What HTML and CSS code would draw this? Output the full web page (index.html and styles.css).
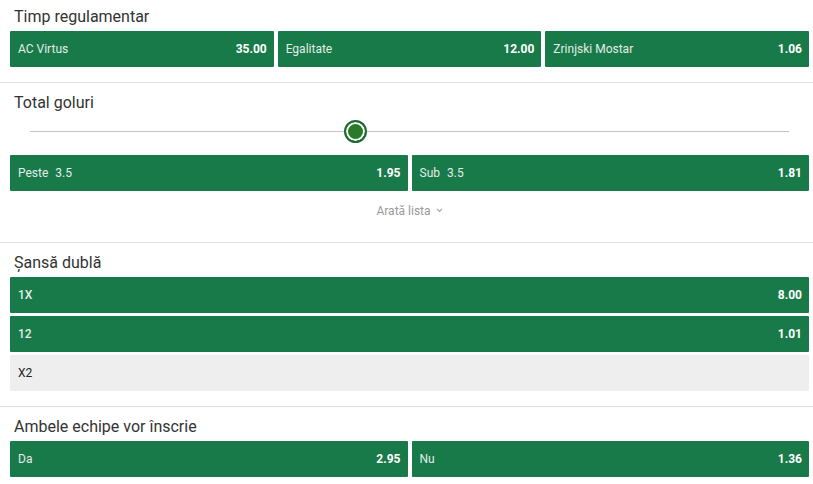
FILE: index.html
```html
<!DOCTYPE html>
<html lang="ro">
<head>
    <meta charset="UTF-8">
    <meta name="viewport" content="width=device-width, initial-scale=1.0">
    <title>Cote meci</title>
    <link rel="stylesheet" href="styles.css">
</head>
<body>
    <div class="market first">
        <h2 class="market-title">Timp regulamentar</h2>
        <div class="odds cols-3">
            <div class="odd"><span class="label">AC Virtus</span><span class="value">35.00</span></div>
            <div class="odd"><span class="label">Egalitate</span><span class="value">12.00</span></div>
            <div class="odd"><span class="label">Zrinjski Mostar</span><span class="value">1.06</span></div>
        </div>
    </div>

    <div class="market">
        <h2 class="market-title">Total goluri</h2>
        <div class="slider">
            <div class="slider-track"></div>
            <div class="slider-knob" style="left: 42.8%;"></div>
        </div>
        <div class="odds cols-2">
            <div class="odd"><span class="label">Peste<span class="line">3.5</span></span><span class="value">1.95</span></div>
            <div class="odd"><span class="label">Sub<span class="line">3.5</span></span><span class="value">1.81</span></div>
        </div>
        <div class="show-list">
            Arată lista
            <svg width="7" height="5" viewBox="0 0 7 5"><polyline points="1,1 3.5,3.5 6,1" fill="none" stroke="#aaa" stroke-width="1.2"/></svg>
        </div>
    </div>

    <div class="market">
        <h2 class="market-title">Șansă dublă</h2>
        <div class="odds rows">
            <div class="odd"><span class="label strong">1X</span><span class="value">8.00</span></div>
            <div class="odd"><span class="label strong">12</span><span class="value">1.01</span></div>
            <div class="odd disabled"><span class="label">X2</span></div>
        </div>
    </div>

    <div class="market last">
        <h2 class="market-title">Ambele echipe vor înscrie</h2>
        <div class="odds cols-2">
            <div class="odd"><span class="label">Da</span><span class="value">2.95</span></div>
            <div class="odd"><span class="label">Nu</span><span class="value">1.36</span></div>
        </div>
    </div>
</body>
</html>
```

FILE: styles.css
```css
body {
    font-family: Roboto, "Liberation Sans", Arial, sans-serif;
    background-color: #fff;
    margin: 0;
    padding: 0;
}

.market {
    padding: 10px 4px 15px 10px;
    border-bottom: 1px solid #e0e0e0;
}

.market.first {
    padding-top: 7px;
}

.market.last {
    border-bottom: none;
}

.market-title {
    margin: 0 0 4px 4px;
    font-size: 16px;
    font-weight: 400;
    line-height: 20px;
    color: #333;
}

.odds {
    display: grid;
    gap: 4px;
}

.cols-3 {
    grid-template-columns: 1fr 1fr 1fr;
}

.cols-2 {
    grid-template-columns: 1fr 1fr;
}

.rows {
    grid-template-columns: 1fr;
    gap: 3px;
}

.odd {
    display: flex;
    align-items: center;
    justify-content: space-between;
    height: 36px;
    padding: 0 7px 1px 8px;
    box-sizing: border-box;
    background-color: #177a48;
    border-radius: 1px;
    font-size: 12px;
    line-height: 16px;
}

.odd .label {
    color: #e4ece8;
}

.odd .label.strong {
    font-weight: 500;
}

.odd .line {
    margin-left: 7px;
}

.odd .value {
    color: #fff;
    font-weight: 700;
}

.odd.disabled {
    background-color: #eeeeee;
}

.odd.disabled .label {
    color: #222;
}

.slider {
    position: relative;
    height: 24px;
    margin: 7px 20px 11px 20px;
}

.slider-track {
    position: absolute;
    left: 0;
    right: 0;
    top: 11px;
    height: 1px;
    background-color: #c4c4c4;
}

.slider-knob {
    position: absolute;
    top: 0;
    width: 23px;
    height: 23px;
    margin-left: -11px;
    box-sizing: border-box;
    border: 2px solid #1d6b2e;
    border-radius: 50%;
    background-color: #2a7a2c;
    box-shadow: inset 0 0 0 2px #fff;
}

.show-list {
    margin-top: 12px;
    margin-bottom: 8px;
    text-align: center;
    font-size: 12px;
    line-height: 16px;
    color: #9a9a9a;
}

.show-list svg {
    margin-left: 2px;
    vertical-align: 2px;
}
```
